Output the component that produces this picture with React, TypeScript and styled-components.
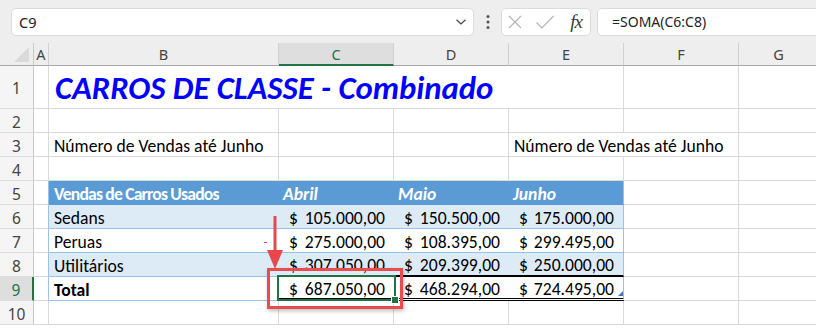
import React from 'react'
import styled, { createGlobalStyle } from 'styled-components'

const GlobalStyle = createGlobalStyle`
  html, body {
    margin: 0;
    padding: 0;
    background: #ffffff;
    overflow: hidden;
  }
`

const CELL_FONT = `Carlito, Lato, 'Liberation Sans', sans-serif`
const UI_FONT = `'Noto Sans', 'Open Sans', sans-serif`

const GRID = '#d9d9d9'
const TABLE_LINE = '#9bc2e6'
const GREEN = '#217346'

const Window = styled.div`
  width: 816px;
  height: 328px;
  background: #ffffff;
  overflow: hidden;
`

const FormulaBar = styled.div`
  display: flex;
  align-items: center;
  height: 43px;
  padding-left: 11px;
  background: #eeeeee;
  box-sizing: border-box;
`

const NameBox = styled.div`
  display: flex;
  align-items: center;
  justify-content: space-between;
  width: 463px;
  height: 28px;
  box-sizing: border-box;
  padding: 0 6px 0 7px;
  background: #ffffff;
  border: 1px solid #dcdcdc;
  border-radius: 5px;
  font-family: ${UI_FONT};
  font-size: 14.5px;
  color: #222;
`

const Dots = styled.div`
  width: 27px;
  display: flex;
  justify-content: center;
`

const FxBox = styled.div`
  display: flex;
  align-items: center;
  width: 90px;
  height: 28px;
  box-sizing: border-box;
  padding: 0 5px 0 5px;
  gap: 12px;
  background: #ffffff;
  border: 1px solid #dcdcdc;
  border-radius: 5px;
`

const Fx = styled.span`
  font-family: 'Liberation Serif', 'DejaVu Serif', serif;
  font-style: italic;
  font-size: 19px;
  color: #3a3a3a;
  margin-left: auto;
  margin-right: 3px;
  letter-spacing: -1px;
`

const FormulaInput = styled.div`
  flex: 1;
  margin-left: 6px;
  margin-right: -12px;
  height: 28px;
  display: flex;
  align-items: center;
  box-sizing: border-box;
  padding-left: 14px;
  background: #ffffff;
  border: 1px solid #dcdcdc;
  border-radius: 5px;
  font-family: ${UI_FONT};
  font-size: 14px;
  color: #222;
`

const Sheet = styled.div`
  display: grid;
  grid-template-columns: 34px 15px 230px 115px 115px 115px 115px 80px;
  grid-template-rows: 23px 43px repeat(9, 24px);
`

const Corner = styled.div`
  position: relative;
  background: #eeeeee;
  border-right: 1px solid #c8c8c8;
  border-bottom: 1px solid #a9a9a9;
  box-sizing: border-box;
`

const CornerTriangle = styled.div`
  position: absolute;
  right: 4px;
  bottom: 3px;
  width: 0;
  height: 0;
  border-left: 15px solid transparent;
  border-bottom: 15px solid #dadada;
`

const ColHead = styled.div<{ $active?: boolean }>`
  display: flex;
  align-items: center;
  justify-content: center;
  box-sizing: border-box;
  background: ${p => (p.$active ? '#dedede' : '#eeeeee')};
  border-right: 1px solid #d0d0d0;
  border-bottom: ${p => (p.$active ? `2px solid ${GREEN}` : '1px solid #a9a9a9')};
  padding-top: ${p => (p.$active ? '1px' : '0')};
  font-family: ${UI_FONT};
  font-size: 14.5px;
  color: ${p => (p.$active ? GREEN : '#444')};
`

const RowHead = styled.div<{ $active?: boolean }>`
  display: flex;
  align-items: center;
  justify-content: center;
  box-sizing: border-box;
  background: ${p => (p.$active ? '#dedede' : '#f5f5f5')};
  border-right: ${p => (p.$active ? `2px solid ${GREEN}` : '1px solid #c8c8c8')};
  border-bottom: 1px solid #dcdcdc;
  padding-top: 2px;
  font-family: ${UI_FONT};
  font-size: 15.5px;
  color: ${p => (p.$active ? GREEN : '#444')};
`

type CellProps = {
  $span?: number
  $bg?: string
  $right?: string
  $bottom?: string
  $bold?: boolean
  $italic?: boolean
  $color?: string
  $size?: number
  $pad?: number
  $money?: boolean
  $raise?: boolean
  $tight?: boolean
}

const Cell = styled.div<CellProps>`
  position: relative;
  z-index: ${p => (p.$raise ? 3 : 'auto')};
  grid-column: span ${p => p.$span ?? 1};
  display: flex;
  align-items: center;
  justify-content: ${p => (p.$money ? 'space-between' : 'flex-start')};
  box-sizing: border-box;
  padding: 2px ${p => (p.$money ? 9 : 0)}px 0 ${p => p.$pad ?? 5}px;
  background: ${p => p.$bg ?? '#ffffff'};
  border-right: ${p => p.$right ?? `1px solid ${GRID}`};
  border-bottom: ${p => p.$bottom ?? `1px solid ${GRID}`};
  font-family: ${CELL_FONT};
  font-size: ${p => p.$size ?? 17.6}px;
  font-weight: ${p => (p.$bold ? 700 : 400)};
  font-style: ${p => (p.$italic ? 'italic' : 'normal')};
  letter-spacing: ${p => (p.$tight ? '-0.8px' : 'normal')};
  color: ${p => p.$color ?? '#000'};
  white-space: nowrap;
`

const Selection = styled.div`
  position: absolute;
  left: -2px;
  top: -2px;
  right: -2px;
  bottom: -3px;
  border: 2px solid ${GREEN};
  pointer-events: none;
`

const FillHandle = styled.div`
  position: absolute;
  right: -5px;
  bottom: -5px;
  width: 6px;
  height: 6px;
  background: ${GREEN};
  border: 1px solid #ffffff;
`

const Highlight = styled.div`
  position: absolute;
  left: -12px;
  top: -9px;
  right: -9px;
  bottom: -11px;
  border: 3px solid #ea4b4f;
  box-shadow: 1px 2px 4px rgba(0, 0, 0, 0.25);
  pointer-events: none;
`

const Arrow = styled.svg`
  position: absolute;
  left: -13px;
  top: -61px;
`

const Tick = styled.span`
  position: absolute;
  right: 12px;
  top: 13px;
  width: 3px;
  height: 1px;
  background: #e04040;
`

const ResizeHandle = styled.span`
  position: absolute;
  right: 0;
  bottom: 2px;
  width: 0;
  height: 0;
  border-left: 5px solid transparent;
  border-bottom: 5px solid #4472c4;
`

const Money = ({ value }: { value: string }) => (
  <>
    <span>$</span>
    <span>{value}</span>
  </>
)

const HEAD_BG = '#5b9bd5'
const BAND_BG = '#ddebf7'
const TBL = `1px solid ${TABLE_LINE}`

const rows = [
  { label: 'Sedans', values: ['105.000,00', '150.500,00', '175.000,00'], bg: BAND_BG },
  { label: 'Peruas', values: ['275.000,00', '108.395,00', '299.495,00'], bg: '#ffffff' },
  { label: 'Utilitários', values: ['307.050,00', '209.399,00', '250.000,00'], bg: BAND_BG },
]

const Blank = ({ n }: { n: number }) => (
  <>
    {Array.from({ length: n }).map((_, i) => (
      <Cell key={i} />
    ))}
  </>
)

const App: React.FC = () => {
  const cols = ['A', 'B', 'C', 'D', 'E', 'F', 'G']

  return (
    <Window>
      <GlobalStyle />
      <FormulaBar>
        <NameBox>
          <span>C9</span>
          <svg width="12" height="8" viewBox="0 0 12 8">
            <path d="M1.5 1.8 L6 6 L10.5 1.8" fill="none" stroke="#444" strokeWidth="1.2" />
          </svg>
        </NameBox>
        <Dots>
          <svg width="4" height="16" viewBox="0 0 4 16">
            <circle cx="2" cy="2.5" r="1.5" fill="#555" />
            <circle cx="2" cy="8" r="1.5" fill="#555" />
            <circle cx="2" cy="13.5" r="1.5" fill="#555" />
          </svg>
        </Dots>
        <FxBox>
          <svg width="16" height="16" viewBox="0 0 16 16">
            <path d="M2 2 L14 14 M14 2 L2 14" stroke="#b4b4b4" strokeWidth="1.1" />
          </svg>
          <svg width="20" height="16" viewBox="0 0 20 16">
            <path d="M1.5 8.5 L7 14 L18.5 2" fill="none" stroke="#b4b4b4" strokeWidth="1.1" />
          </svg>
          <Fx>fx</Fx>
        </FxBox>
        <FormulaInput>=SOMA(C6:C8)</FormulaInput>
      </FormulaBar>

      <Sheet>
        <Corner>
          <CornerTriangle />
        </Corner>
        {cols.map(c => (
          <ColHead key={c} $active={c === 'C'}>
            {c}
          </ColHead>
        ))}

        {/* row 1 */}
        <RowHead>1</RowHead>
        <Cell />
        <Cell $span={4} $bold $italic $color="#0000ff" $size={32.7} $pad={6}>
          CARROS DE CLASSE - Combinado
        </Cell>
        <Blank n={2} />

        {/* row 2 */}
        <RowHead>2</RowHead>
        <Blank n={7} />

        {/* row 3 */}
        <RowHead>3</RowHead>
        <Cell />
        <Cell>Número de Vendas até Junho</Cell>
        <Blank n={2} />
        <Cell $span={2}>Número de Vendas até Junho</Cell>
        <Blank n={1} />

        {/* row 4 */}
        <RowHead>4</RowHead>
        <Blank n={7} />

        {/* row 5 */}
        <RowHead>5</RowHead>
        <Cell $right={TBL} />
        <Cell $bg={HEAD_BG} $right="none" $bottom={`1px solid ${HEAD_BG}`} $bold $tight $color="#fff">
          Vendas de Carros Usados
        </Cell>
        {['Abril', 'Maio', 'Junho'].map((m, i) => (
          <Cell
            key={m}
            $bg={HEAD_BG}
            $right={i === 2 ? TBL : 'none'}
            $bottom={`1px solid ${HEAD_BG}`}
            $bold
            $italic
            $color="#fff"
            $pad={4}
          >
            {m}
          </Cell>
        ))}
        <Blank n={2} />

        {/* rows 6-8 */}
        {rows.map((r, ri) => (
          <React.Fragment key={r.label}>
            <RowHead>{6 + ri}</RowHead>
            <Cell $right={TBL} />
            <Cell $bg={r.bg} $right="none" $bottom={TBL}>
              {r.label}
              {ri === 1 && <Tick />}
            </Cell>
            {r.values.map((v, vi) => (
              <Cell
                key={v}
                $bg={r.bg}
                $money
                $pad={10}
                $right={vi === 2 ? TBL : 'none'}
                $bottom={ri === 2 ? '2px solid #000' : TBL}
              >
                <Money value={v} />
              </Cell>
            ))}
            <Blank n={2} />
          </React.Fragment>
        ))}

        {/* row 9 */}
        <RowHead $active>9</RowHead>
        <Cell $right={TBL} />
        <Cell $right="none" $bottom={TBL} $bold>
          Total
        </Cell>
        <Cell $money $raise $pad={10} $right="none" $bottom="3px double #000">
          <Money value="687.050,00" />
          <Selection>
            <FillHandle />
          </Selection>
          <Highlight />
          <Arrow width="18" height="54" viewBox="0 0 18 54">
            <path d="M9 0 L9 38" stroke="#e8484c" strokeWidth="3" />
            <path d="M1 34 L17 34 L9 53 Z" fill="#e8484c" />
          </Arrow>
        </Cell>
        <Cell $money $pad={10} $right="none" $bottom="3px double #000">
          <Money value="468.294,00" />
        </Cell>
        <Cell $money $pad={10} $right={TBL} $bottom="3px double #000">
          <Money value="724.495,00" />
          <ResizeHandle />
        </Cell>
        <Blank n={2} />

        {/* row 10 */}
        <RowHead>10</RowHead>
        <Blank n={7} />
      </Sheet>
    </Window>
  )
}

export default App
